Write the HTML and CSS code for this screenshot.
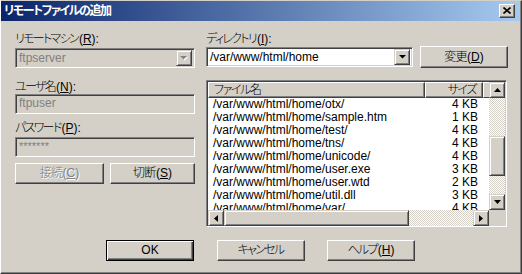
FILE: index.html
```html
<!DOCTYPE html>
<html lang="ja">
<head>
<meta charset="utf-8">
<link rel="stylesheet" href="styles.css">
</head>
<body>
<div class="window">
  <div class="titlebar">
    <span class="title">リモートファイルの追加</span>
    <span class="close"><svg width="8" height="7" viewBox="0 0 8 7"><path d="M0.5 0.5 L7.5 6.5 M7.5 0.5 L0.5 6.5" stroke="#000" stroke-width="1.6" fill="none"/></svg></span>
  </div>
  <div class="client">
    <div class="top">
      <div class="left">
        <div class="lbl"><span class="ja">リモートマシン</span>(<u>R</u>):</div>
        <div class="combo disabled">
          <span class="val">ftpserver</span>
          <span class="drop"><svg width="8" height="5" viewBox="0 0 8 5"><path d="M1 1 H8 L4.5 4.5 Z" fill="#fff"/><path d="M0 0 H7 L3.5 3.5 Z" fill="#808080"/></svg></span>
        </div>
        <div class="lbl l-user"><span class="ja">ユーザ名</span>(<u>N</u>):</div>
        <div class="edit disabled">ftpuser</div>
        <div class="lbl l-pass"><span class="ja">パスワード</span>(<u>P</u>):</div>
        <div class="edit disabled pass">*******</div>
        <div class="btnrow">
          <div class="btn dis w89"><span class="kj">接続</span>(<u>C</u>)</div>
          <div class="btn w85"><span class="kj">切断</span>(<u>S</u>)</div>
        </div>
      </div>
      <div class="right">
        <div class="lbl"><span class="ja">ディレクトリ</span>(<u>I</u>):</div>
        <div class="dirrow">
          <div class="combo dir">
            <span class="val">/var/www/html/home</span>
            <span class="drop"><svg width="7" height="4" viewBox="0 0 7 4"><path d="M0 0 H7 L3.5 3.5 Z" fill="#000"/></svg></span>
          </div>
          <div class="btn change"><span class="kj">変更</span>(<u>D</u>)</div>
        </div>
        <div class="listview">
          <div class="lv-main">
            <div class="lv-body">
              <div class="header">
                <div class="hcell c-name"><span class="ja">ファイル名</span></div>
                <div class="hcell c-size"><span class="ja">サイズ</span></div>
                <div class="hcell c-fill"></div>
              </div>
              <div class="rows">
                <div class="row"><span class="c-name">/var/www/html/home/otx/</span><span class="c-size">4 KB</span></div>
                <div class="row"><span class="c-name">/var/www/html/home/sample.htm</span><span class="c-size">1 KB</span></div>
                <div class="row"><span class="c-name">/var/www/html/home/test/</span><span class="c-size">4 KB</span></div>
                <div class="row"><span class="c-name">/var/www/html/home/tns/</span><span class="c-size">4 KB</span></div>
                <div class="row"><span class="c-name">/var/www/html/home/unicode/</span><span class="c-size">4 KB</span></div>
                <div class="row"><span class="c-name">/var/www/html/home/user.exe</span><span class="c-size">3 KB</span></div>
                <div class="row"><span class="c-name">/var/www/html/home/user.wtd</span><span class="c-size">2 KB</span></div>
                <div class="row"><span class="c-name">/var/www/html/home/util.dll</span><span class="c-size">3 KB</span></div>
                <div class="row"><span class="c-name">/var/www/html/home/var/</span><span class="c-size">4 KB</span></div>
              </div>
            </div>
            <div class="vscroll">
              <div class="sbtn"><svg width="7" height="4" viewBox="0 0 7 4"><path d="M3.5 0 L7 4 H0 Z" fill="#000"/></svg></div>
              <div class="track vt1"></div>
              <div class="thumb vthumb"></div>
              <div class="track vt2"></div>
              <div class="sbtn"><svg width="7" height="4" viewBox="0 0 7 4"><path d="M0 0 H7 L3.5 4 Z" fill="#000"/></svg></div>
            </div>
          </div>
          <div class="lv-foot">
            <div class="hscroll">
              <div class="sbtn"><svg width="4" height="7" viewBox="0 0 4 7"><path d="M4 0 V7 L0 3.5 Z" fill="#000"/></svg></div>
              <div class="thumb hthumb"></div>
              <div class="track ht"></div>
              <div class="sbtn"><svg width="4" height="7" viewBox="0 0 4 7"><path d="M0 0 V7 L4 3.5 Z" fill="#000"/></svg></div>
            </div>
            <div class="corner"></div>
          </div>
        </div>
      </div>
    </div>
    <div class="bottom">
      <div class="btn default">OK</div>
      <div class="btn"><span class="ja">キャンセル</span></div>
      <div class="btn"><span class="ja">ヘルプ</span>(<u>H</u>)</div>
    </div>
  </div>
</div>
</body>
</html>
```

FILE: styles.css
```css
* { box-sizing: border-box; }
html, body { margin: 0; padding: 0; background: #d4d0c8; }
body {
  font-family: "Liberation Sans", "Noto Sans CJK JP", sans-serif;
  font-size: 12px;
  font-weight: 300;
  font-feature-settings: "palt" 1;
  color: #000;
}
u { text-decoration: underline; text-underline-offset: 1px; }

.window {
  width: 522px;
  height: 274px;
  background: #d4d0c8;
  border-top: 1px solid #d4d0c8;
  border-left: 1px solid #ffffff;
  border-right: 1px solid #404040;
  border-bottom: 1px solid #404040;
  box-shadow: inset -1px -1px #808080;
  display: flex;
  flex-direction: column;
}

.titlebar {
  height: 20px;
  margin-right: 1px;
  background: linear-gradient(to right, #0a246a, #a6caf0);
  display: flex;
  align-items: center;
  justify-content: space-between;
  padding: 0 5px 0 3px;
}
.title {
  color: #fff;
  font-weight: bold;
  font-size: 12px;
  line-height: 20px;
  letter-spacing: -1.4px;
}
.close {
  width: 16px;
  height: 14px;
  background: #d4d0c8;
  border-top: 1px solid #fff;
  border-left: 1px solid #fff;
  border-right: 1px solid #404040;
  border-bottom: 1px solid #404040;
  box-shadow: inset -1px -1px #808080;
  display: flex;
  align-items: center;
  justify-content: center;
  padding-bottom: 1px;
}

.client {
  flex: 1;
  padding: 11px 0 0 14px;
  display: flex;
  flex-direction: column;
}
.top {
  display: flex;
  gap: 11px;
  height: 196px;
}
.left { width: 180px; display: flex; flex-direction: column; }
.right { width: 302px; display: flex; flex-direction: column; }

.lbl { height: 14px; line-height: 14px; white-space: nowrap; }
.l-user { margin-top: 12px; }
.l-pass { margin-top: 7px; }
.ja { letter-spacing: -1.7px; margin-right: 1px; }
.kj { letter-spacing: -0.8px; margin-right: 0.5px; }

.combo {
  height: 20px;
  margin-top: 2px;
  background: #fff;
  border-top: 1px solid #808080;
  border-left: 1px solid #808080;
  border-right: 1px solid #fff;
  border-bottom: 1px solid #fff;
  box-shadow: inset 1px 1px #404040, inset -1px -1px #d4d0c8;
  display: flex;
  align-items: center;
  padding: 2px 2px 2px 3px;
}
.combo.disabled { background: #d4d0c8; color: #808080; }
.combo .val { flex: 1; line-height: 16px; white-space: nowrap; }
.drop {
  width: 16px;
  height: 16px;
  flex: none;
  background: #d4d0c8;
  border-top: 1px solid #d4d0c8;
  border-left: 1px solid #d4d0c8;
  border-right: 1px solid #404040;
  border-bottom: 1px solid #404040;
  box-shadow: inset 1px 1px #fff, inset -1px -1px #808080;
  display: flex;
  align-items: center;
  justify-content: center;
}

.edit {
  height: 20px;
  background: #fff;
  border-top: 1px solid #808080;
  border-left: 1px solid #808080;
  border-right: 1px solid #fff;
  border-bottom: 1px solid #fff;
  box-shadow: inset 1px 1px #404040, inset -1px -1px #d4d0c8;
  padding: 0 3px;
  line-height: 17px;
  white-space: nowrap;
}
.edit.disabled { background: #d4d0c8; color: #808080; }
.edit.pass { margin-top: 2px; font-size: 11px; }

.btn {
  width: 88px;
  height: 21px;
  background: #d4d0c8;
  border-top: 1px solid #fff;
  border-left: 1px solid #fff;
  border-right: 1px solid #404040;
  border-bottom: 1px solid #404040;
  box-shadow: inset -1px -1px #808080;
  display: flex;
  align-items: center;
  justify-content: center;
  line-height: 15px;
  white-space: nowrap;
}
.btn.dis { color: #808080; text-shadow: 1px 1px #fff; }
.btnrow { display: flex; gap: 6px; margin-top: 6px; }
.w89 { width: 89px; }
.w85 { width: 85px; }

.dirrow { display: flex; align-items: center; gap: 7px; height: 22px; }
.combo.dir { width: 207px; margin-top: 0; }
.btn.change { height: 22px; }

.listview {
  margin-top: 12px;
  width: 301px;
  height: 147px;
  background: #fff;
  border-top: 1px solid #808080;
  border-left: 1px solid #808080;
  border-right: 1px solid #fff;
  border-bottom: 1px solid #fff;
  box-shadow: inset 1px 1px #404040, inset -1px -1px #d4d0c8;
  padding: 1px;
  display: flex;
  flex-direction: column;
}
.lv-main { display: flex; height: 128px; }
.lv-body { flex: 1; overflow: hidden; display: flex; flex-direction: column; }
.header { display: flex; height: 16px; flex: none; }
.hcell {
  height: 16px;
  background: #d4d0c8;
  border-top: 1px solid #fff;
  border-left: 1px solid #fff;
  border-right: 1px solid #404040;
  border-bottom: 1px solid #404040;
  box-shadow: inset -1px -1px #808080;
  line-height: 14px;
  white-space: nowrap;
}
.hcell .ja { letter-spacing: -1.4px; }
.hcell.c-name { width: 217px; padding-left: 5px; }
.hcell.c-size { width: 58px; text-align: right; padding-right: 5px; }
.hcell.c-fill { flex: 1; border-right: none; box-shadow: none; }
.rows { flex: 1; overflow: hidden; }
.row { display: flex; height: 13px; line-height: 13px; white-space: nowrap; }
.row .c-name { width: 217px; padding-left: 5px; }
.row .c-size { width: 58px; text-align: right; padding-right: 5px; }

.vscroll { width: 16px; display: flex; flex-direction: column; }
.sbtn {
  width: 16px;
  height: 16px;
  flex: none;
  background: #d4d0c8;
  border-top: 1px solid #d4d0c8;
  border-left: 1px solid #d4d0c8;
  border-right: 1px solid #404040;
  border-bottom: 1px solid #404040;
  box-shadow: inset 1px 1px #fff, inset -1px -1px #808080;
  display: flex;
  align-items: center;
  justify-content: center;
}
.track {
  background: repeating-conic-gradient(#d4d0c8 0 25%, #fff 0 50%) 0 0 / 2px 2px;
  flex: none;
}
.thumb {
  flex: none;
  background: #d4d0c8;
  border-top: 1px solid #d4d0c8;
  border-left: 1px solid #d4d0c8;
  border-right: 1px solid #404040;
  border-bottom: 1px solid #404040;
  box-shadow: inset 1px 1px #fff, inset -1px -1px #808080;
}
.vt1 { height: 38px; }
.vthumb { height: 40px; }
.vt2 { flex: 1; }

.lv-foot { display: flex; height: 16px; }
.hscroll { width: 281px; display: flex; }
.hthumb { width: 185px; }
.ht { flex: 1; }
.corner { flex: 1; background: #d4d0c8; }

.bottom {
  display: flex;
  margin-top: 12px;
  padding-left: 91px;
  gap: 23px;
}
.bottom .btn:nth-child(3) { margin-left: -1px; }
.btn.default {
  border: 1px solid #000;
  box-shadow: inset 1px 1px #fff, inset -1px -1px #404040, inset -2px -2px #808080;
}
```
